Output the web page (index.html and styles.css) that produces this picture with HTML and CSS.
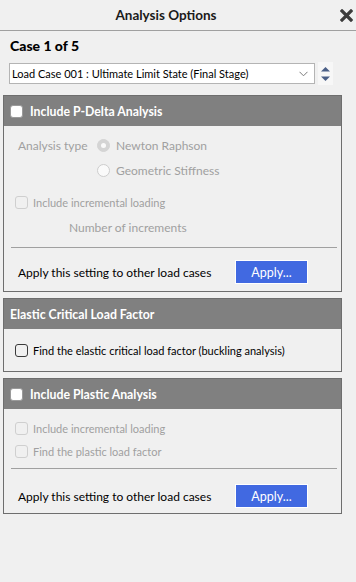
FILE: index.html
```html
<!DOCTYPE html>
<html lang="en">
<head>
    <meta charset="UTF-8">
    <title>Analysis Options</title>
    <link rel="stylesheet" href="styles.css">
</head>
<body>
    <div class="titlebar">
        <h1>Analysis Options</h1>
        <button class="close" aria-label="Close">
            <svg width="13" height="13" viewBox="0 0 13 13"><path d="M2 2 L11 11 M11 2 L2 11" stroke="#3c3c3c" stroke-width="3.2" stroke-linecap="square"/></svg>
        </button>
    </div>

    <div class="content">
        <h2 class="case-title">Case 1 of 5</h2>
        <div class="case-row">
            <div class="select">
                <span>Load Case 001 : Ultimate Limit State (Final Stage)</span>
                <svg width="9" height="6" viewBox="0 0 9 6"><path d="M0.5 0.8 L4.5 4.8 L8.5 0.8" fill="none" stroke="#7a7a7a" stroke-width="1"/></svg>
            </div>
            <div class="spinner">
                <svg width="9" height="6" viewBox="0 0 9 6"><path d="M0 5.5 L4.5 1 L9 5.5 Z" fill="#4a5f87"/></svg>
                <svg width="9" height="6" viewBox="0 0 9 6"><path d="M0 0.5 L4.5 5 L9 0.5 Z" fill="#4a5f87"/></svg>
            </div>
        </div>

        <section class="panel">
            <div class="panel-head">
                <span class="check head-check"></span>
                Include P-Delta Analysis
            </div>
            <div class="panel-body pdelta">
                <div class="row disabled">
                    <span class="label-type">Analysis type</span>
                    <span class="radio checked"></span>
                    <span>Newton Raphson</span>
                </div>
                <div class="row disabled radio-second">
                    <span class="radio"></span>
                    <span>Geometric Stiffness</span>
                </div>
                <div class="row check-row disabled gap-top">
                    <span class="check dim"></span>
                    <span>Include incremental loading</span>
                </div>
                <div class="row disabled increments">Number of increments</div>
                <hr class="sep">
                <div class="apply-row">
                    <span>Apply this setting to other load cases</span>
                    <button class="btn">Apply...</button>
                </div>
            </div>
        </section>

        <section class="panel">
            <div class="panel-head">Elastic Critical Load Factor</div>
            <div class="panel-body elastic">
                <div class="row check-row">
                    <span class="check"></span>
                    <span>Find the elastic critical load factor (buckling analysis)</span>
                </div>
            </div>
        </section>

        <section class="panel">
            <div class="panel-head">
                <span class="check head-check"></span>
                Include Plastic Analysis
            </div>
            <div class="panel-body plastic">
                <div class="row check-row disabled">
                    <span class="check dim"></span>
                    <span>Include incremental loading</span>
                </div>
                <div class="row check-row disabled">
                    <span class="check dim"></span>
                    <span>Find the plastic load factor</span>
                </div>
                <hr class="sep">
                <div class="apply-row">
                    <span>Apply this setting to other load cases</span>
                    <button class="btn">Apply...</button>
                </div>
            </div>
        </section>
    </div>
</body>
</html>
```

FILE: styles.css
```css
body {
    margin: 0;
    background: #f0f0f0;
    font-family: 'Lato', 'Open Sans', sans-serif;
    font-size: 12px;
    color: #000;
}

.titlebar {
    height: 30px;
    border-bottom: 1px solid #a0a0a0;
    display: flex;
    align-items: center;
}

.titlebar h1 {
    flex: 1;
    margin: 0;
    text-align: center;
    font-size: 13.5px;
    font-weight: bold;
    color: #1a1a1a;
}

.close {
    margin-right: 3px;
    margin-left: 8px;
    background: none;
    border: none;
    padding: 0;
    display: flex;
}

.content {
    padding: 0 14px 0 3px;
}

.case-title {
    margin: 7px 0 0 7px;
    font-size: 14px;
    line-height: 16px;
    font-weight: 900;
}

.case-row {
    display: flex;
    align-items: center;
    margin: 8px 0 0 6px;
}

.select {
    height: 19px;
    border: 1px solid #b4b4b4;
    background: #fff;
    display: flex;
    align-items: center;
    justify-content: space-between;
    padding: 0 6px 0 2px;
    width: 296px;
    font-size: 11px;
}

.spinner {
    margin-left: 3px;
    width: 15px;
    height: 23px;
    background: #f7f7f7;
    display: flex;
    flex-direction: column;
    align-items: center;
    justify-content: center;
    gap: 4px;
}

.panel {
    border: 1px solid #6e6e6e;
    margin-top: 10px;
}

.panel + .panel {
    margin-top: 6px;
}

.panel-head {
    height: 30px;
    background: #808080;
    color: #fff;
    font-weight: bold;
    font-size: 12.3px;
    display: flex;
    align-items: center;
    padding-left: 6px;
}

.panel-body {
    padding: 9px 4px 7px 4px;
}

.elastic {
    padding: 11px 4px 11px 4px;
}

.plastic {
    padding: 9px 4px 5px 4px;
}

.plastic .row + .row {
    margin-top: 3px;
}

.row {
    height: 20px;
    display: flex;
    align-items: center;
    padding-left: 7px;
}

.check-row {
    font-size: 11px;
}

.disabled {
    color: #a0a0a0;
}

.label-type {
    width: 79px;
    padding-left: 3px;
}

.radio-second {
    margin-top: 5px;
    padding-left: 89px;
}

.gap-top {
    margin-top: 12px;
}

.increments {
    margin-top: 5px;
    padding-left: 61px;
}

.radio {
    width: 13px;
    height: 13px;
    border-radius: 50%;
    border: 1px solid #cdcdcd;
    background: #fafafa;
    box-sizing: border-box;
    margin-right: 6px;
    display: flex;
    align-items: center;
    justify-content: center;
}

.radio.checked {
    background: #d4d4d4;
    border-color: #d4d4d4;
}

.radio.checked::after {
    content: "";
    width: 5px;
    height: 5px;
    border-radius: 50%;
    background: #fafafa;
}

.check {
    width: 13px;
    height: 13px;
    box-sizing: border-box;
    border: 1px solid #3a3a3a;
    border-radius: 3px;
    margin-right: 5px;
    flex: none;
}

.check.dim {
    border-color: #cfcfcf;
}

.head-check {
    background: #fff;
    border-color: #9a9a9a;
    margin-right: 7px;
}

.sep {
    border: none;
    border-top: 1px solid #a0a0a0;
    margin: 10px 0 0 3px;
}

.apply-row {
    display: flex;
    align-items: center;
    padding-left: 10px;
    margin-top: 12px;
}

.plastic .sep {
    margin-top: 7px;
}

.plastic .apply-row {
    margin-top: 15px;
}

.apply-row span {
    width: 217px;
}

.btn {
    width: 73px;
    height: 24px;
    background: #4169e1;
    color: #fff;
    border: 1px solid #fff;
    font-family: inherit;
    font-size: 12.5px;
    padding: 0;
}
```
